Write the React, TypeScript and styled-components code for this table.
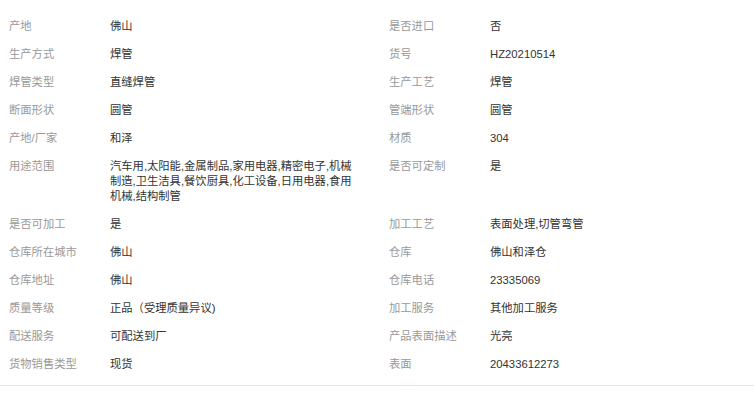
import React from "react";
import styled, { createGlobalStyle } from "styled-components";

const GlobalStyle = createGlobalStyle`
  html, body {
    margin: 0;
    padding: 0;
    background: #ffffff;
  }
  body {
    font-family: "Liberation Sans", "Noto Sans CJK SC", sans-serif;
  }
`;

const Panel = styled.section`
  width: 754px;
  padding: 13px 0 6px;
  border-bottom: 1px solid #e8e8e8;
  box-sizing: border-box;
`;

const Grid = styled.dl`
  margin: 0;
  display: grid;
  grid-template-columns: 380px 1fr;
`;

const Item = styled.div`
  display: flex;
  align-items: flex-start;
  padding: 6px 0 7px 9px;
  font-size: 11.3px;
  line-height: 15px;
`;

const Label = styled.dt`
  flex: 0 0 101px;
  margin: 0;
  color: #999999;
  white-space: nowrap;
`;

const Value = styled.dd`
  margin: 0;
  width: 248px;
  color: #333333;
  word-break: break-all;
`;

type Spec = [string, string];

const specs: Spec[][] = [
  [["产地", "佛山"], ["是否进口", "否"]],
  [["生产方式", "焊管"], ["货号", "HZ20210514"]],
  [["焊管类型", "直缝焊管"], ["生产工艺", "焊管"]],
  [["断面形状", "圆管"], ["管端形状", "圆管"]],
  [["产地/厂家", "和泽"], ["材质", "304"]],
  [
    [
      "用途范围",
      "汽车用,太阳能,金属制品,家用电器,精密电子,机械制造,卫生洁具,餐饮厨具,化工设备,日用电器,食用机械,结构制管",
    ],
    ["是否可定制", "是"],
  ],
  [["是否可加工", "是"], ["加工工艺", "表面处理,切管弯管"]],
  [["仓库所在城市", "佛山"], ["仓库", "佛山和泽仓"]],
  [["仓库地址", "佛山"], ["仓库电话", "23335069"]],
  [["质量等级", "正品（受理质量异议)"], ["加工服务", "其他加工服务"]],
  [["配送服务", "可配送到厂"], ["产品表面描述", "光亮"]],
  [["货物销售类型", "现货"], ["表面", "20433612273"]],
];

export default function App() {
  return (
    <>
      <GlobalStyle />
      <Panel>
        <Grid>
          {specs.flat().map(([label, value], i) => (
            <Item key={i}>
              <Label>{label}</Label>
              <Value>{value}</Value>
            </Item>
          ))}
        </Grid>
      </Panel>
    </>
  );
}
